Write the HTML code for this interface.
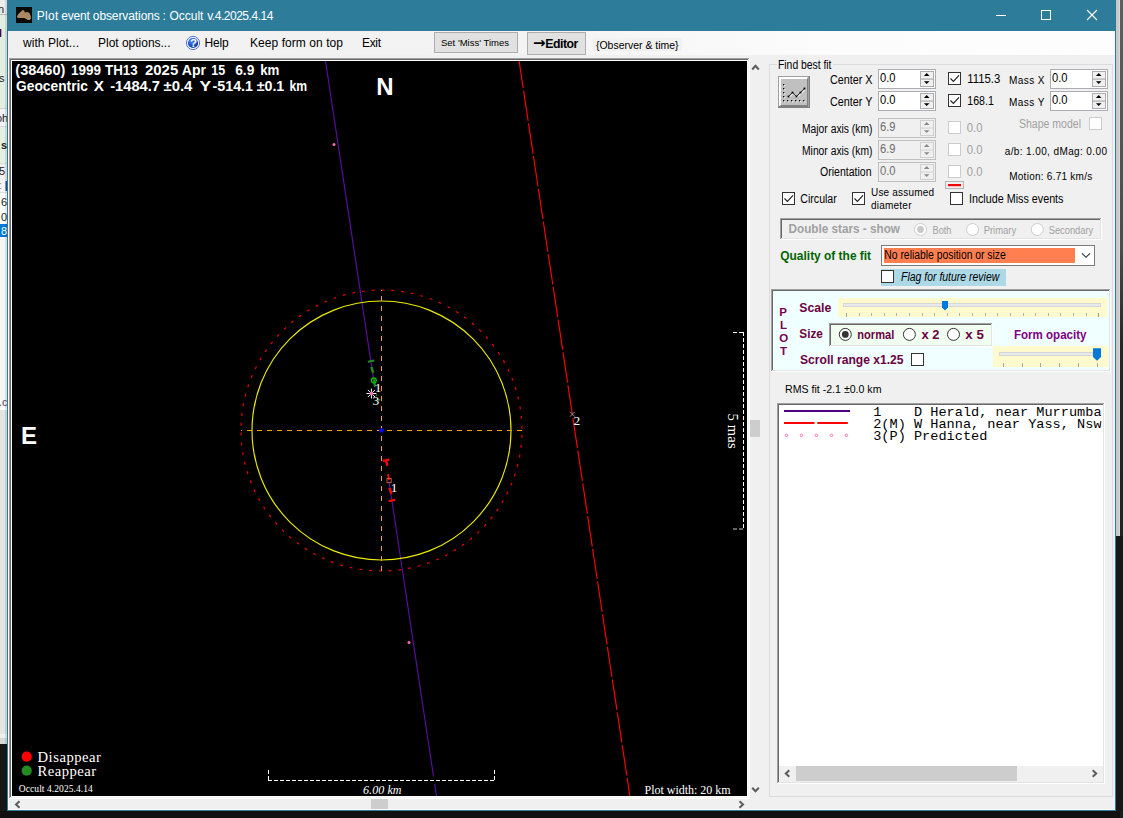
<!DOCTYPE html>
<html lang="en"><head><meta charset="utf-8"><title>Plot event observations : Occult v.4.2025.4.14</title>
<style>html,body{margin:0;padding:0;background:#1b1b1b;overflow:hidden}svg{display:block}text{white-space:pre}</style></head>
<body>
<svg width="1123" height="818" viewBox="0 0 1123 818">
<rect x="0" y="0" width="1123" height="818" fill="#171717" />
<rect x="0" y="811" width="1123" height="7" fill="#111111" />
<rect x="0" y="0" width="7" height="744" fill="#e6e6e6" />
<rect x="0" y="0" width="7" height="15" fill="#ececec" />
<rect x="0" y="15" width="7" height="93" fill="#e2eee2" />
<rect x="0" y="108" width="7" height="19" fill="#f2f2f2" />
<rect x="0" y="127" width="7" height="36" fill="#e4f0e4" />
<rect x="0" y="163" width="7" height="18" fill="#f0f0f0" />
<rect x="0" y="181" width="7" height="12" fill="#f6f6fa" />
<rect x="0" y="193" width="7" height="31" fill="#ffffff" />
<rect x="0" y="224" width="7" height="13" fill="#0078d7" />
<rect x="0" y="237" width="7" height="171" fill="#f6f6f6" />
<rect x="0" y="408" width="7" height="2" fill="#ffffff" />
<rect x="0" y="410" width="7" height="324" fill="#e4e4e4" />
<rect x="0" y="734" width="7" height="4" fill="#f0f0f0" />
<rect x="0" y="738" width="7" height="6" fill="#d8d8d8" />
<rect x="5.5" y="181" width="1.5" height="10" fill="#1c4fa8" />
<rect x="0" y="14" width="7" height="1" fill="#bcbcbc" />
<rect x="0" y="108" width="7" height="1" fill="#d2d2d2" />
<rect x="0" y="126" width="7" height="1" fill="#d8d8d8" />
<rect x="0" y="163" width="7" height="1" fill="#dcdcdc" />
<rect x="0" y="192" width="7" height="1" fill="#e0e0e0" />
<rect x="5" y="0" width="2" height="744" fill="#000" opacity="0.10"/>
<g font-family="Liberation Sans, sans-serif" font-size="11" fill="#222">
<text x="-2" y="13">n</text><text x="-6" y="37" font-weight="bold" fill="#500">H</text><text x="-7" y="82">ns</text><text x="-4" y="122">oh</text>
<text x="1" y="149" font-weight="bold">s</text><text x="-1" y="175">5</text><text x="-1" y="189" fill="#e08020">:</text><text x="1" y="206">6</text><text x="1" y="221">0</text><text x="1" y="235" fill="#fff">8</text><text x="-1" y="406" fill="#546">.c</text>
</g>
<rect x="1116" y="0" width="4" height="536" fill="#c9c9c9" />
<defs><linearGradient id="rg" x1="0" x2="0" y1="0" y2="1"><stop offset="0" stop-color="#5e5e5e"/><stop offset="0.3" stop-color="#4c4c4c"/><stop offset="0.42" stop-color="#262626"/><stop offset="1" stop-color="#1c1c1c"/></linearGradient></defs>
<rect x="1120" y="0" width="3" height="818" fill="url(#rg)" />
<rect x="1119" y="0" width="1" height="536" fill="#dadada" />
<rect x="1116" y="536" width="7" height="275" fill="#171717" />
<rect x="7" y="0" width="1109" height="811" fill="#2d7d9a" />
<rect x="8" y="31" width="1107" height="779" fill="#f0f0f0" />
<rect x="8" y="809" width="1107" height="1" fill="#fbfbfb" />
<rect x="8" y="31" width="1" height="779" fill="#fbf7f7" />
<rect x="16" y="7" width="16" height="16" fill="#0c0a06" />
<path d="M17.0,16.3 L18.6,13.8 L21.1,11.5 L22.7,10.1 L24,10.6 L24.9,12.5 L27.2,11.9 L29.4,13.1 L30.7,15.7 L31,18.5 L29.7,20.1 L27.8,20.1 L25.9,18.8 L24,17.9 L21.1,17.9 L18.3,17.9 L17.1,17.2 Z" fill="#aa8a62"/>
<text y="20" font-family="Liberation Sans, Arial, sans-serif" font-size="12" font-weight="normal" fill="#fff" xml:space="preserve"><tspan x="36.8" textLength="21.6" lengthAdjust="spacing">Plot</tspan> <tspan x="61.2" textLength="28.6" lengthAdjust="spacing">event</tspan> <tspan x="92.8" textLength="67.0" lengthAdjust="spacing">observations</tspan> <tspan x="162.6" textLength="3.0" lengthAdjust="spacing">:</tspan> <tspan x="169.5" textLength="33.9" lengthAdjust="spacing">Occult</tspan> <tspan x="207.2" textLength="66.2" lengthAdjust="spacing">v.4.2025.4.14</tspan></text>
<line x1="996" y1="15.5" x2="1006" y2="15.5" stroke="#fff" stroke-width="1" />
<rect x="1041.5" y="10.5" width="9" height="9" fill="none" stroke="#fff" stroke-width="1"/>
<path d="M1087,10 L1097,20 M1097,10 L1087,20" stroke="#fff" stroke-width="1.1" fill="none"/>
<defs><linearGradient id="mg" x1="0" x2="1" y1="0" y2="0"><stop offset="0" stop-color="#f0f0f0"/><stop offset="0.45" stop-color="#f3f3f3"/><stop offset="0.75" stop-color="#fcfcfc"/><stop offset="1" stop-color="#fdfdfd"/></linearGradient></defs>
<rect x="8" y="31" width="1107" height="24" fill="url(#mg)" />
<text x="23" y="47" font-family="Liberation Sans, Arial, sans-serif" font-size="12" font-weight="normal" font-style="normal" fill="#000" textLength="56" lengthAdjust="spacing" xml:space="preserve" >with Plot...</text>
<text x="98" y="47" font-family="Liberation Sans, Arial, sans-serif" font-size="12" font-weight="normal" font-style="normal" fill="#000" textLength="72.5" lengthAdjust="spacing" xml:space="preserve" >Plot options...</text>
<defs><radialGradient id="hg" cx="0.35" cy="0.3" r="0.8"><stop offset="0" stop-color="#4d82f0"/><stop offset="0.55" stop-color="#1f55c8"/><stop offset="1" stop-color="#0b3597"/></radialGradient></defs>
<circle cx="193" cy="43" r="6.6" fill="#f4f7ff" stroke="#3f6ad0" stroke-width="0.9"/>
<circle cx="193" cy="43" r="5.1" fill="url(#hg)"/>
<text x="190.1" y="47.2" font-family="Liberation Sans, Arial, sans-serif" font-size="11.5" font-weight="bold" font-style="normal" fill="#fff" xml:space="preserve" >?</text>
<text x="204.4" y="47" font-family="Liberation Sans, Arial, sans-serif" font-size="12" font-weight="normal" font-style="normal" fill="#000" textLength="24.3" lengthAdjust="spacing" xml:space="preserve" >Help</text>
<text x="250" y="47" font-family="Liberation Sans, Arial, sans-serif" font-size="12" font-weight="normal" font-style="normal" fill="#000" textLength="93" lengthAdjust="spacing" xml:space="preserve" >Keep form on top</text>
<text x="362" y="47" font-family="Liberation Sans, Arial, sans-serif" font-size="12" font-weight="normal" font-style="normal" fill="#000" textLength="19" lengthAdjust="spacing" xml:space="preserve" >Exit</text>
<rect x="434.5" y="32.5" width="83" height="20" fill="#e1e1e1" stroke="#adadad"/>
<text x="441" y="46" font-family="Liberation Sans, Arial, sans-serif" font-size="9.5" font-weight="normal" font-style="normal" fill="#000" textLength="68" lengthAdjust="spacing" xml:space="preserve" >Set 'Miss' Times</text>
<rect x="527.5" y="32.5" width="58" height="22" fill="#e1e1e1" stroke="#adadad"/>
<text x="533" y="48" font-family="DejaVu Sans, sans-serif" font-size="15" font-weight="bold" font-style="normal" fill="#000" textLength="12.5" lengthAdjust="spacingAndGlyphs" xml:space="preserve" >→</text>
<text x="545.2" y="48" font-family="Liberation Sans, Arial, sans-serif" font-size="12.3" font-weight="bold" font-style="normal" fill="#000" textLength="33.2" lengthAdjust="spacing" xml:space="preserve" >Editor</text>
<rect x="593" y="38" width="89" height="13" fill="#f1f1f1" />
<text x="596" y="49" font-family="Liberation Sans, Arial, sans-serif" font-size="11.7" font-weight="normal" font-style="normal" fill="#000" textLength="82.5" lengthAdjust="spacingAndGlyphs" xml:space="preserve" >{Observer &amp; time}</text>
<rect x="9" y="58" width="741" height="741" fill="#ffffff" />
<rect x="9" y="58" width="740" height="1" fill="#a0a0a0" />
<rect x="9" y="58" width="1" height="740" fill="#a0a0a0" />
<rect x="10" y="59" width="738" height="1" fill="#696969" />
<rect x="10" y="59" width="1" height="738" fill="#696969" />
<rect x="748" y="60" width="1" height="738" fill="#f4f4f4" />
<rect x="11" y="797" width="738" height="1" fill="#f4f4f4" />
<rect x="12" y="61" width="735" height="735" fill="#000" />
<clipPath id="pc"><rect x="12" y="61" width="735" height="735"/></clipPath>
<g clip-path="url(#pc)">
<line x1="325.349" y1="60" x2="373.73" y2="380.4" stroke="#5610a2" stroke-width="1.15" />
<line x1="388.92" y1="481" x2="433.54" y2="776.5" stroke="#5610a2" stroke-width="1.15" />
<line x1="434.67" y1="784" x2="436.64" y2="797" stroke="#5610a2" stroke-width="1.15" />
<line x1="518.9493" y1="60" x2="630.02" y2="797" stroke="#ff0000" stroke-width="1.15" stroke-dasharray="30.6 2.5" stroke-dashoffset="2.2"/>
<circle cx="381.5" cy="430.5" r="140.5" fill="none" stroke="#ec0000" stroke-width="1.2" stroke-dasharray="2.8 7.01" stroke-dashoffset="5.18"/>
<circle cx="381.5" cy="430.5" r="129.5" fill="none" stroke="#ecec00" stroke-width="1.15"/>
<line x1="241" y1="430.5" x2="522" y2="430.5" stroke="#ffa500" stroke-width="1" stroke-dasharray="5 5" stroke-dashoffset="4" shape-rendering="crispEdges"/>
<line x1="381.5" y1="290" x2="381.5" y2="572" stroke="#ffa500" stroke-width="1" stroke-dasharray="5 5" stroke-dashoffset="4" shape-rendering="crispEdges"/>
<circle cx="381.5" cy="430.5" r="2.3" fill="#0000ff"/>
<circle cx="334" cy="144.5" r="1.5" fill="#ff69b4"/><circle cx="409" cy="642.5" r="1.5" fill="#ff69b4"/>
<line x1="367.8" y1="361.7" x2="374.4" y2="360.5" stroke="#228b22" stroke-width="2.1" />
<line x1="371.4" y1="366.8" x2="373.2" y2="372.8" stroke="#228b22" stroke-width="2.4" />
<line x1="373.8" y1="379.5" x2="375.1" y2="386.8" stroke="#228b22" stroke-width="2.3" />
<circle cx="373.8" cy="380.4" r="2.4" fill="none" stroke="#00c000" stroke-width="1.3"/>
<line x1="377.6" y1="400.2" x2="380.2" y2="399.8" stroke="#228b22" stroke-width="1.4" />
<circle cx="376.5" cy="395.2" r="0.9" fill="#228b22"/>
<path d="M366.4,393.5 H376.4 M371.4,388.5 V398.5 M367.8,389.9 L375,397.1 M375,389.9 L367.8,397.1" stroke="#f4f4f4" stroke-width="1" fill="none"/>
<circle cx="371.4" cy="393.5" r="1.7" fill="#ff69b4"/>
<text x="374.8" y="392" font-family="Liberation Serif, Times New Roman, serif" font-size="13.3" font-weight="normal" font-style="normal" fill="#fff" xml:space="preserve" >1</text>
<text x="372.6" y="405" font-family="Liberation Serif, Times New Roman, serif" font-size="13.3" font-weight="normal" font-style="normal" fill="#fff" xml:space="preserve" >3</text>
<line x1="382.8" y1="460.9" x2="389.2" y2="459.6" stroke="#ff0000" stroke-width="2.5" />
<line x1="386" y1="460.5" x2="387.4" y2="465.8" stroke="#ff0000" stroke-width="2.5" />
<line x1="387.8" y1="474" x2="389.2" y2="480" stroke="#ff0000" stroke-width="1.8" />
<rect x="387" y="478.5" width="4.2" height="4.2" fill="none" stroke="#d0603c" stroke-width="0.9"/>
<line x1="389.4" y1="488" x2="391.4" y2="494" stroke="#ff0000" stroke-width="2.5" />
<line x1="388.8" y1="501.1" x2="395.2" y2="499.9" stroke="#ff0000" stroke-width="2.4" />
<text x="390.7" y="492" font-family="Liberation Serif, Times New Roman, serif" font-size="13.3" font-weight="normal" font-style="normal" fill="#fff" xml:space="preserve" >1</text>
<path d="M570,411.8 L574.8,416.6 M574.8,411.8 L570,416.6" stroke="#8c8c8c" stroke-width="1" fill="none"/>
<text x="573.6" y="425" font-family="Liberation Serif, Times New Roman, serif" font-size="13.3" font-weight="normal" font-style="normal" fill="#fff" xml:space="preserve" >2</text>
<text y="75" font-family="Liberation Sans, Arial, sans-serif" font-size="14" font-weight="bold" fill="#fff" xml:space="preserve"><tspan x="15.3" textLength="50.0" lengthAdjust="spacingAndGlyphs">(38460)</tspan> <tspan x="71" textLength="30" lengthAdjust="spacingAndGlyphs">1999</tspan> <tspan x="105" textLength="32.6" lengthAdjust="spacingAndGlyphs">TH13</tspan>  <tspan x="145" textLength="33.2" lengthAdjust="spacingAndGlyphs">2025</tspan> <tspan x="181.8" textLength="24.2" lengthAdjust="spacingAndGlyphs">Apr</tspan> <tspan x="211.3" textLength="13.9" lengthAdjust="spacingAndGlyphs">15</tspan>   <tspan x="235.2" textLength="19.2" lengthAdjust="spacingAndGlyphs">6.9</tspan> <tspan x="260.2" textLength="19.2" lengthAdjust="spacingAndGlyphs">km</tspan></text>
<text y="91" font-family="Liberation Sans, Arial, sans-serif" font-size="14" font-weight="bold" fill="#fff" xml:space="preserve"><tspan x="16" textLength="72" lengthAdjust="spacingAndGlyphs">Geocentric</tspan>  <tspan x="93.8" textLength="10.2" lengthAdjust="spacingAndGlyphs">X</tspan>  <tspan x="110.2" textLength="49.8" lengthAdjust="spacingAndGlyphs">-1484.7</tspan> <tspan x="163.5" textLength="28.9" lengthAdjust="spacingAndGlyphs">±0.4</tspan>  <tspan x="199.6" textLength="11.4" lengthAdjust="spacingAndGlyphs">Y</tspan> <tspan x="212.5" textLength="40.5" lengthAdjust="spacingAndGlyphs">-514.1</tspan> <tspan x="256.7" textLength="27.6" lengthAdjust="spacingAndGlyphs">±0.1</tspan> <tspan x="289.4" textLength="17.6" lengthAdjust="spacingAndGlyphs">km</tspan></text>
<text x="376.3" y="95" font-family="Liberation Sans, Arial, sans-serif" font-size="24" font-weight="bold" font-style="normal" fill="#fff" xml:space="preserve" >N</text>
<text x="21" y="444" font-family="Liberation Sans, Arial, sans-serif" font-size="24" font-weight="bold" font-style="normal" fill="#fff" xml:space="preserve" >E</text>
<circle cx="26.7" cy="756.7" r="5.1" fill="#ff0000"/><circle cx="26.7" cy="770.7" r="5.1" fill="#228b22"/>
<text x="37.5" y="762" font-family="Liberation Serif, Times New Roman, serif" font-size="14.67" font-weight="normal" font-style="normal" fill="#fff" textLength="63.5" lengthAdjust="spacing" xml:space="preserve" >Disappear</text>
<text x="37.5" y="776" font-family="Liberation Serif, Times New Roman, serif" font-size="14.67" font-weight="normal" font-style="normal" fill="#fff" textLength="58.7" lengthAdjust="spacing" xml:space="preserve" >Reappear</text>
<text x="18.8" y="792" font-family="Liberation Serif, Times New Roman, serif" font-size="9.5" font-weight="normal" font-style="normal" fill="#fff" textLength="74" lengthAdjust="spacing" xml:space="preserve" >Occult 4.2025.4.14</text>
<line x1="268.5" y1="770" x2="268.5" y2="781" stroke="#fff" stroke-width="1" stroke-dasharray="4 2" shape-rendering="crispEdges"/>
<line x1="268" y1="780.5" x2="495" y2="780.5" stroke="#fff" stroke-width="1" stroke-dasharray="4 2" shape-rendering="crispEdges"/>
<line x1="494.5" y1="770" x2="494.5" y2="781" stroke="#fff" stroke-width="1" stroke-dasharray="4 2" shape-rendering="crispEdges"/>
<text x="363" y="793.7" font-family="Liberation Serif, Times New Roman, serif" font-size="12" font-weight="normal" font-style="italic" fill="#fff" textLength="38.5" lengthAdjust="spacing" xml:space="preserve" >6.00 km</text>
<text x="644.5" y="793.7" font-family="Liberation Serif, Times New Roman, serif" font-size="12" font-weight="normal" font-style="normal" fill="#fff" textLength="86" lengthAdjust="spacing" xml:space="preserve" >Plot width: 20 km</text>
<line x1="733" y1="332.5" x2="744" y2="332.5" stroke="#fff" stroke-width="1" stroke-dasharray="4 2" shape-rendering="crispEdges"/>
<line x1="743.5" y1="332" x2="743.5" y2="529" stroke="#fff" stroke-width="1" stroke-dasharray="4 2" shape-rendering="crispEdges"/>
<line x1="733" y1="529" x2="744" y2="529" stroke="#c8c8c8" stroke-width="1" stroke-dasharray="4 2"/>
<g transform="translate(727.8,413.6) rotate(90)">
<text x="0" y="0" font-family="Liberation Serif, Times New Roman, serif" font-size="14.67" font-weight="normal" font-style="normal" fill="#fff" textLength="35" lengthAdjust="spacing" xml:space="preserve" >5 mas</text>
</g>
</g>
<rect x="750" y="420" width="10" height="17" fill="#cdcdcd" />
<path d="M752.2,69.5 L755.5,65.8 L758.8,69.5" stroke="#5c5c5c" stroke-width="2" fill="none"/>
<path d="M752.2,787.8 L755.5,791.3 L758.8,787.8" stroke="#5c5c5c" stroke-width="2" fill="none"/>
<rect x="371" y="799" width="17" height="10" fill="#cdcdcd" />
<path d="M19.5,801.2 L16,804.5 L19.5,807.8" stroke="#5c5c5c" stroke-width="2" fill="none"/>
<path d="M739.5,801.2 L743,804.5 L739.5,807.8" stroke="#5c5c5c" stroke-width="2" fill="none"/>
<path d="M777,64.5 H769.5 V796.5 H1112.5 V64.5 H833" fill="none" stroke="#dcdcdc" stroke-width="1"/>
<text x="778" y="69" font-family="Liberation Sans, Arial, sans-serif" font-size="12.5" font-weight="normal" font-style="normal" fill="#000" textLength="53.5" lengthAdjust="spacingAndGlyphs" xml:space="preserve" >Find best fit</text>
<rect x="778" y="76" width="32" height="32" fill="#808080" />
<rect x="778" y="76" width="31" height="31" fill="#a0a0a0" />
<rect x="779" y="77" width="29" height="29" fill="#ffffff" />
<path d="M808,77 V108 H778 V107 L781,105 H807 V79 Z" fill="#808080"/>
<path d="M809,76 V108 H778 Z" fill="#808080" opacity="0"/>
<rect x="781" y="79" width="26" height="26" fill="#c0c0c0" />
<rect x="784" y="85" width="1.2" height="1.2" fill="#fff" />
<rect x="783" y="84" width="1.3" height="1.3" fill="#000" />
<rect x="784" y="89" width="1.2" height="1.2" fill="#fff" />
<rect x="783" y="88" width="1.3" height="1.3" fill="#000" />
<rect x="784" y="93" width="1.2" height="1.2" fill="#fff" />
<rect x="783" y="92" width="1.3" height="1.3" fill="#000" />
<rect x="784" y="97" width="1.2" height="1.2" fill="#fff" />
<rect x="783" y="96" width="1.3" height="1.3" fill="#000" />
<rect x="784" y="101" width="1.2" height="1.2" fill="#fff" />
<rect x="783" y="100" width="1.3" height="1.3" fill="#000" />
<rect x="788" y="101" width="1.2" height="1.2" fill="#fff" />
<rect x="787" y="100" width="1.3" height="1.3" fill="#000" />
<rect x="792" y="101" width="1.2" height="1.2" fill="#fff" />
<rect x="791" y="100" width="1.3" height="1.3" fill="#000" />
<rect x="796" y="101" width="1.2" height="1.2" fill="#fff" />
<rect x="795" y="100" width="1.3" height="1.3" fill="#000" />
<rect x="800" y="101" width="1.2" height="1.2" fill="#fff" />
<rect x="799" y="100" width="1.3" height="1.3" fill="#000" />
<rect x="804" y="101" width="1.2" height="1.2" fill="#fff" />
<rect x="803" y="100" width="1.3" height="1.3" fill="#000" />
<path d="M788.5,96.5 L792.5,92.5 L796.5,96.5 L800.5,92.5 L804.5,88.5" stroke="#fff" stroke-width="1" fill="none" transform="translate(0.8,0.8)"/>
<path d="M788.5,96.5 L792.5,92.5 L796.5,96.5 L800.5,92.5 L804.5,88.5" stroke="#000" stroke-width="0.8" fill="none"/>
<rect x="787.6" y="95.6" width="1.8" height="1.8" fill="#000" />
<rect x="791.6" y="91.6" width="1.8" height="1.8" fill="#000" />
<rect x="795.6" y="95.6" width="1.8" height="1.8" fill="#000" />
<rect x="799.6" y="91.6" width="1.8" height="1.8" fill="#000" />
<rect x="803.6" y="87.6" width="1.8" height="1.8" fill="#000" />
<text x="830" y="84" font-family="Liberation Sans, Arial, sans-serif" font-size="12.5" font-weight="normal" font-style="normal" fill="#000" textLength="42.5" lengthAdjust="spacingAndGlyphs" xml:space="preserve" >Center X</text>
<text x="830" y="106" font-family="Liberation Sans, Arial, sans-serif" font-size="12.5" font-weight="normal" font-style="normal" fill="#000" textLength="42.5" lengthAdjust="spacingAndGlyphs" xml:space="preserve" >Center Y</text>
<rect x="878.5" y="69.5" width="57" height="19" fill="#fff" stroke="#abadb3"/>
<rect x="920.5" y="71.5" width="13" height="15" fill="#f0f0f0" stroke="#adadad"/>
<rect x="921" y="78.5" width="12" height="1.2" fill="#adadad" />
<path d="M923.9000000000001,75.9 L926.7,73 L929.5,75.9 Z" fill="#000"/>
<path d="M923.9000000000001,81.2 L926.7,84.1 L929.5,81.2 Z" fill="#000"/>
<text x="880" y="82" font-family="Liberation Sans, Arial, sans-serif" font-size="12.6" font-weight="normal" font-style="normal" fill="#000" textLength="15.5" lengthAdjust="spacingAndGlyphs" xml:space="preserve" >0.0</text>
<rect x="878.5" y="91.5" width="57" height="19" fill="#fff" stroke="#abadb3"/>
<rect x="920.5" y="93.5" width="13" height="15" fill="#f0f0f0" stroke="#adadad"/>
<rect x="921" y="100.5" width="12" height="1.2" fill="#adadad" />
<path d="M923.9000000000001,97.9 L926.7,95 L929.5,97.9 Z" fill="#000"/>
<path d="M923.9000000000001,103.2 L926.7,106.1 L929.5,103.2 Z" fill="#000"/>
<text x="880" y="104" font-family="Liberation Sans, Arial, sans-serif" font-size="12.6" font-weight="normal" font-style="normal" fill="#000" textLength="15.5" lengthAdjust="spacingAndGlyphs" xml:space="preserve" >0.0</text>
<rect x="948.5" y="72.5" width="12" height="12" fill="#fff" stroke="#333333"/>
<path d="M950.5,78.5 L953.4,81.5 L959,75.4" fill="none" stroke="#222" stroke-width="1.15"/>
<rect x="948.5" y="94.5" width="12" height="12" fill="#fff" stroke="#333333"/>
<path d="M950.5,100.5 L953.4,103.5 L959,97.4" fill="none" stroke="#222" stroke-width="1.15"/>
<text x="967.3" y="83" font-family="Liberation Sans, Arial, sans-serif" font-size="12.6" font-weight="normal" font-style="normal" fill="#000" textLength="33" lengthAdjust="spacingAndGlyphs" xml:space="preserve" >1115.3</text>
<text x="967.3" y="105" font-family="Liberation Sans, Arial, sans-serif" font-size="12.6" font-weight="normal" font-style="normal" fill="#000" textLength="26.5" lengthAdjust="spacingAndGlyphs" xml:space="preserve" >168.1</text>
<text x="1009" y="84" font-family="Liberation Sans, Arial, sans-serif" font-size="10" font-weight="normal" font-style="normal" fill="#000" textLength="35.5" lengthAdjust="spacing" xml:space="preserve" >Mass X</text>
<text x="1009" y="106" font-family="Liberation Sans, Arial, sans-serif" font-size="10" font-weight="normal" font-style="normal" fill="#000" textLength="35.5" lengthAdjust="spacing" xml:space="preserve" >Mass Y</text>
<rect x="1050.5" y="69.5" width="57" height="19" fill="#fff" stroke="#abadb3"/>
<rect x="1092.5" y="71.5" width="13" height="15" fill="#f0f0f0" stroke="#adadad"/>
<rect x="1093" y="78.5" width="12" height="1.2" fill="#adadad" />
<path d="M1095.9,75.9 L1098.7,73 L1101.5,75.9 Z" fill="#000"/>
<path d="M1095.9,81.2 L1098.7,84.1 L1101.5,81.2 Z" fill="#000"/>
<text x="1052" y="82" font-family="Liberation Sans, Arial, sans-serif" font-size="12.6" font-weight="normal" font-style="normal" fill="#000" textLength="15.5" lengthAdjust="spacingAndGlyphs" xml:space="preserve" >0.0</text>
<rect x="1050.5" y="91.5" width="57" height="19" fill="#fff" stroke="#abadb3"/>
<rect x="1092.5" y="93.5" width="13" height="15" fill="#f0f0f0" stroke="#adadad"/>
<rect x="1093" y="100.5" width="12" height="1.2" fill="#adadad" />
<path d="M1095.9,97.9 L1098.7,95 L1101.5,97.9 Z" fill="#000"/>
<path d="M1095.9,103.2 L1098.7,106.1 L1101.5,103.2 Z" fill="#000"/>
<text x="1052" y="104" font-family="Liberation Sans, Arial, sans-serif" font-size="12.6" font-weight="normal" font-style="normal" fill="#000" textLength="15.5" lengthAdjust="spacingAndGlyphs" xml:space="preserve" >0.0</text>
<text x="802" y="133" font-family="Liberation Sans, Arial, sans-serif" font-size="12.5" font-weight="normal" font-style="normal" fill="#000" textLength="70.5" lengthAdjust="spacingAndGlyphs" xml:space="preserve" >Major axis (km)</text>
<text x="802" y="155" font-family="Liberation Sans, Arial, sans-serif" font-size="12.5" font-weight="normal" font-style="normal" fill="#000" textLength="70.5" lengthAdjust="spacingAndGlyphs" xml:space="preserve" >Minor axis (km)</text>
<text x="820" y="176" font-family="Liberation Sans, Arial, sans-serif" font-size="12.5" font-weight="normal" font-style="normal" fill="#000" textLength="51.5" lengthAdjust="spacingAndGlyphs" xml:space="preserve" >Orientation</text>
<rect x="878.5" y="118.5" width="57" height="19" fill="#f0f0f0" stroke="#bfbfbf"/>
<rect x="920.5" y="120.5" width="13" height="15" fill="#f0f0f0" stroke="#d0d0d0"/>
<rect x="921" y="127.5" width="12" height="1.2" fill="#d6d6d6" />
<path d="M923.9000000000001,124.9 L926.7,122 L929.5,124.9 Z" fill="#8a8a8a"/>
<path d="M923.9000000000001,130.2 L926.7,133.1 L929.5,130.2 Z" fill="#8a8a8a"/>
<text x="880" y="131" font-family="Liberation Sans, Arial, sans-serif" font-size="12.6" font-weight="normal" font-style="normal" fill="#6d6d6d" textLength="15.5" lengthAdjust="spacingAndGlyphs" xml:space="preserve" >6.9</text>
<rect x="878.5" y="140.5" width="57" height="19" fill="#f0f0f0" stroke="#bfbfbf"/>
<rect x="920.5" y="142.5" width="13" height="15" fill="#f0f0f0" stroke="#d0d0d0"/>
<rect x="921" y="149.5" width="12" height="1.2" fill="#d6d6d6" />
<path d="M923.9000000000001,146.9 L926.7,144 L929.5,146.9 Z" fill="#8a8a8a"/>
<path d="M923.9000000000001,152.2 L926.7,155.1 L929.5,152.2 Z" fill="#8a8a8a"/>
<text x="880" y="153" font-family="Liberation Sans, Arial, sans-serif" font-size="12.6" font-weight="normal" font-style="normal" fill="#6d6d6d" textLength="15.5" lengthAdjust="spacingAndGlyphs" xml:space="preserve" >6.9</text>
<rect x="878.5" y="162.5" width="57" height="19" fill="#f0f0f0" stroke="#bfbfbf"/>
<rect x="920.5" y="164.5" width="13" height="15" fill="#f0f0f0" stroke="#d0d0d0"/>
<rect x="921" y="171.5" width="12" height="1.2" fill="#d6d6d6" />
<path d="M923.9000000000001,168.9 L926.7,166 L929.5,168.9 Z" fill="#8a8a8a"/>
<path d="M923.9000000000001,174.2 L926.7,177.1 L929.5,174.2 Z" fill="#8a8a8a"/>
<text x="880" y="175" font-family="Liberation Sans, Arial, sans-serif" font-size="12.6" font-weight="normal" font-style="normal" fill="#6d6d6d" textLength="15.5" lengthAdjust="spacingAndGlyphs" xml:space="preserve" >0.0</text>
<rect x="948.5" y="121.5" width="12" height="12" fill="#fff" stroke="#cccccc"/>
<text x="966.8" y="132" font-family="Liberation Sans, Arial, sans-serif" font-size="12.6" font-weight="normal" font-style="normal" fill="#a0a0a0" textLength="15.7" lengthAdjust="spacingAndGlyphs" xml:space="preserve" >0.0</text>
<rect x="948.5" y="143.5" width="12" height="12" fill="#fff" stroke="#cccccc"/>
<text x="966.8" y="154" font-family="Liberation Sans, Arial, sans-serif" font-size="12.6" font-weight="normal" font-style="normal" fill="#a0a0a0" textLength="15.7" lengthAdjust="spacingAndGlyphs" xml:space="preserve" >0.0</text>
<rect x="948.5" y="165.5" width="12" height="12" fill="#fff" stroke="#cccccc"/>
<text x="966.8" y="176" font-family="Liberation Sans, Arial, sans-serif" font-size="12.6" font-weight="normal" font-style="normal" fill="#a0a0a0" textLength="15.7" lengthAdjust="spacingAndGlyphs" xml:space="preserve" >0.0</text>
<text x="1019" y="128" font-family="Liberation Sans, Arial, sans-serif" font-size="12.5" font-weight="normal" font-style="normal" fill="#a0a0a0" textLength="62" lengthAdjust="spacingAndGlyphs" xml:space="preserve" >Shape model</text>
<rect x="1089.5" y="117.5" width="12" height="12" fill="#fff" stroke="#cccccc"/>
<text x="1004.7" y="155" font-family="Liberation Sans, Arial, sans-serif" font-size="10" font-weight="normal" font-style="normal" fill="#000" textLength="102.3" lengthAdjust="spacing" xml:space="preserve" >a/b: 1.00, dMag: 0.00</text>
<text x="1009.2" y="180" font-family="Liberation Sans, Arial, sans-serif" font-size="10" font-weight="normal" font-style="normal" fill="#000" textLength="83" lengthAdjust="spacing" xml:space="preserve" >Motion: 6.71 km/s</text>
<rect x="945.5" y="181.5" width="18" height="7" fill="#f0f0f0" stroke="#b4b4b4"/>
<rect x="948" y="184" width="13" height="2.2" fill="#ff0000" />
<rect x="782.5" y="192.5" width="12" height="12" fill="#fff" stroke="#333333"/>
<path d="M784.5,198.5 L787.4,201.5 L793,195.4" fill="none" stroke="#222" stroke-width="1.15"/>
<text x="800.3" y="203" font-family="Liberation Sans, Arial, sans-serif" font-size="12.5" font-weight="normal" font-style="normal" fill="#000" textLength="36.5" lengthAdjust="spacingAndGlyphs" xml:space="preserve" >Circular</text>
<rect x="852.5" y="192.5" width="12" height="12" fill="#fff" stroke="#333333"/>
<path d="M854.5,198.5 L857.4,201.5 L863,195.4" fill="none" stroke="#222" stroke-width="1.15"/>
<text x="871" y="196" font-family="Liberation Sans, Arial, sans-serif" font-size="10" font-weight="normal" font-style="normal" fill="#000" textLength="63" lengthAdjust="spacing" xml:space="preserve" >Use assumed</text>
<text x="871" y="209" font-family="Liberation Sans, Arial, sans-serif" font-size="10" font-weight="normal" font-style="normal" fill="#000" textLength="40.5" lengthAdjust="spacing" xml:space="preserve" >diameter</text>
<rect x="950.5" y="192.5" width="12" height="12" fill="#fff" stroke="#333333"/>
<text x="969" y="203" font-family="Liberation Sans, Arial, sans-serif" font-size="12.5" font-weight="normal" font-style="normal" fill="#000" textLength="94.5" lengthAdjust="spacingAndGlyphs" xml:space="preserve" >Include Miss events</text>
<rect x="780" y="218" width="322" height="22" fill="#ffffff" />
<rect x="780" y="218" width="321" height="21" fill="#a0a0a0" />
<rect x="781" y="219" width="320" height="20" fill="#e3e3e3" />
<rect x="781" y="219" width="319" height="19" fill="#696969" />
<rect x="782" y="220" width="318" height="18" fill="#f0f0f0" />
<text x="788.5" y="233" font-family="Liberation Sans, Arial, sans-serif" font-size="13" font-weight="bold" font-style="normal" fill="#a0a0a0" textLength="111.5" lengthAdjust="spacingAndGlyphs" xml:space="preserve" >Double stars - show</text>
<circle cx="920.5" cy="229.5" r="6" fill="#fff" stroke="#cccccc"/>
<circle cx="920.5" cy="229.5" r="3.4" fill="#c8c8c8"/>
<text x="932.5" y="234" font-family="Liberation Sans, Arial, sans-serif" font-size="10" font-weight="normal" font-style="normal" fill="#a0a0a0" textLength="19" lengthAdjust="spacingAndGlyphs" xml:space="preserve" >Both</text>
<circle cx="972.5" cy="229.5" r="6" fill="#fff" stroke="#cccccc"/>
<text x="983.7" y="234" font-family="Liberation Sans, Arial, sans-serif" font-size="10" font-weight="normal" font-style="normal" fill="#a0a0a0" textLength="32.5" lengthAdjust="spacingAndGlyphs" xml:space="preserve" >Primary</text>
<circle cx="1037.3" cy="229.5" r="6" fill="#fff" stroke="#cccccc"/>
<text x="1048.7" y="234" font-family="Liberation Sans, Arial, sans-serif" font-size="10" font-weight="normal" font-style="normal" fill="#a0a0a0" textLength="44.5" lengthAdjust="spacingAndGlyphs" xml:space="preserve" >Secondary</text>
<text x="780.3" y="260" font-family="Liberation Sans, Arial, sans-serif" font-size="12.6" font-weight="bold" font-style="normal" fill="#006400" textLength="90.8" lengthAdjust="spacingAndGlyphs" xml:space="preserve" >Quality of the fit</text>
<rect x="881.5" y="245.5" width="213" height="20" fill="#fff" stroke="#7a7a7a"/>
<rect x="884" y="248" width="191" height="15" fill="#ff7f50" />
<text x="884.3" y="259" font-family="Liberation Sans, Arial, sans-serif" font-size="12.5" font-weight="normal" font-style="normal" fill="#000" textLength="121.5" lengthAdjust="spacingAndGlyphs" xml:space="preserve" >No reliable position or size</text>
<path d="M1082,253.3 L1086,257.3 L1090,253.3" fill="none" stroke="#333" stroke-width="1.1"/>
<rect x="881" y="269" width="125" height="17" fill="#add8e6" />
<rect x="881.5" y="270.5" width="12" height="12" fill="#fff" stroke="#333333"/>
<text x="901" y="281" font-family="Liberation Sans, Arial, sans-serif" font-size="12.5" font-weight="normal" font-style="italic" fill="#000" textLength="98.3" lengthAdjust="spacingAndGlyphs" xml:space="preserve" >Flag for future review</text>
<rect x="771" y="289" width="340" height="83" fill="#ffffff" />
<rect x="771" y="289" width="339" height="82" fill="#a0a0a0" />
<rect x="772" y="290" width="338" height="81" fill="#e3e3e3" />
<rect x="772" y="290" width="337" height="80" fill="#696969" />
<rect x="773" y="291" width="336" height="79" fill="#f0ffff" />
<text x="779.3" y="315.5" font-family="Liberation Sans, Arial, sans-serif" font-size="11.5" font-weight="bold" font-style="normal" fill="#7a0050" xml:space="preserve" >P</text>
<text x="779.9" y="328.5" font-family="Liberation Sans, Arial, sans-serif" font-size="11.5" font-weight="bold" font-style="normal" fill="#7a0050" xml:space="preserve" >L</text>
<text x="779.3" y="341.5" font-family="Liberation Sans, Arial, sans-serif" font-size="11.5" font-weight="bold" font-style="normal" fill="#7a0050" xml:space="preserve" >O</text>
<text x="779.9" y="354.5" font-family="Liberation Sans, Arial, sans-serif" font-size="11.5" font-weight="bold" font-style="normal" fill="#7a0050" xml:space="preserve" >T</text>
<text x="799.3" y="312" font-family="Liberation Sans, Arial, sans-serif" font-size="12" font-weight="bold" font-style="normal" fill="#6c0042" textLength="32" lengthAdjust="spacingAndGlyphs" xml:space="preserve" >Scale</text>
<rect x="838" y="298" width="269" height="19" fill="#fffacd" />
<rect x="843.5" y="303.5" width="257" height="3" fill="#e7eaea" stroke="#d6d6d6"/>
<rect x="846" y="313" width="1" height="4" fill="#a0a0a0" />
<rect x="859" y="313" width="1" height="3" fill="#b4b4b4" />
<rect x="871" y="313" width="1" height="3" fill="#b4b4b4" />
<rect x="884" y="313" width="1" height="3" fill="#b4b4b4" />
<rect x="896" y="313" width="1" height="3" fill="#b4b4b4" />
<rect x="909" y="313" width="1" height="3" fill="#b4b4b4" />
<rect x="922" y="313" width="1" height="3" fill="#b4b4b4" />
<rect x="934" y="313" width="1" height="3" fill="#b4b4b4" />
<rect x="947" y="313" width="1" height="3" fill="#b4b4b4" />
<rect x="959" y="313" width="1" height="3" fill="#b4b4b4" />
<rect x="972" y="313" width="1" height="3" fill="#b4b4b4" />
<rect x="985" y="313" width="1" height="3" fill="#b4b4b4" />
<rect x="997" y="313" width="1" height="3" fill="#b4b4b4" />
<rect x="1010" y="313" width="1" height="3" fill="#b4b4b4" />
<rect x="1023" y="313" width="1" height="3" fill="#b4b4b4" />
<rect x="1035" y="313" width="1" height="3" fill="#b4b4b4" />
<rect x="1048" y="313" width="1" height="3" fill="#b4b4b4" />
<rect x="1060" y="313" width="1" height="3" fill="#b4b4b4" />
<rect x="1073" y="313" width="1" height="3" fill="#b4b4b4" />
<rect x="1086" y="313" width="1" height="3" fill="#b4b4b4" />
<rect x="1098" y="313" width="1" height="4" fill="#a0a0a0" />
<path d="M942,301 H948 V307.5 L945,310.5 L942,307.5 Z" fill="#0078d7"/>
<text x="799.3" y="337.6" font-family="Liberation Sans, Arial, sans-serif" font-size="12" font-weight="bold" font-style="normal" fill="#6c0042" textLength="23.5" lengthAdjust="spacingAndGlyphs" xml:space="preserve" >Size</text>
<rect x="829" y="323" width="164" height="24" fill="#ffffff" />
<rect x="829" y="323" width="163" height="23" fill="#a0a0a0" />
<rect x="830" y="324" width="162" height="22" fill="#e3e3e3" />
<rect x="830" y="324" width="161" height="21" fill="#696969" />
<rect x="831" y="325" width="160" height="20" fill="#f0fff0" />
<circle cx="845.3" cy="334.4" r="6" fill="#fff" stroke="#333333"/>
<circle cx="845.3" cy="334.4" r="3.4" fill="#333"/>
<text x="857.3" y="338.6" font-family="Liberation Sans, Arial, sans-serif" font-size="12" font-weight="bold" font-style="normal" fill="#6c0042" textLength="37" lengthAdjust="spacingAndGlyphs" xml:space="preserve" >normal</text>
<circle cx="909.4" cy="334.4" r="6" fill="#fff" stroke="#333333"/>
<text x="921.5" y="338.6" font-family="Liberation Sans, Arial, sans-serif" font-size="12" font-weight="bold" font-style="normal" fill="#6c0042" textLength="18" lengthAdjust="spacingAndGlyphs" xml:space="preserve" >x 2</text>
<circle cx="953.5" cy="334.4" r="6" fill="#fff" stroke="#333333"/>
<text x="965.3" y="338.6" font-family="Liberation Sans, Arial, sans-serif" font-size="12" font-weight="bold" font-style="normal" fill="#6c0042" textLength="18.5" lengthAdjust="spacingAndGlyphs" xml:space="preserve" >x 5</text>
<text x="1014" y="338.9" font-family="Liberation Sans, Arial, sans-serif" font-size="12" font-weight="bold" font-style="normal" fill="#800080" textLength="72.5" lengthAdjust="spacingAndGlyphs" xml:space="preserve" >Form opacity</text>
<text x="800" y="364" font-family="Liberation Sans, Arial, sans-serif" font-size="12" font-weight="bold" font-style="normal" fill="#6c0042" textLength="103.5" lengthAdjust="spacingAndGlyphs" xml:space="preserve" >Scroll range x1.25</text>
<rect x="911.5" y="353.5" width="12" height="12" fill="#fff" stroke="#333333"/>
<rect x="993" y="346" width="115" height="21" fill="#fffacd" />
<rect x="999.5" y="352.5" width="101" height="3" fill="#e7eaea" stroke="#d6d6d6"/>
<rect x="1003" y="363" width="1" height="4" fill="#a8a8a8" />
<rect x="1022" y="363" width="1" height="4" fill="#a8a8a8" />
<rect x="1040" y="363" width="1" height="4" fill="#a8a8a8" />
<rect x="1059" y="363" width="1" height="4" fill="#a8a8a8" />
<rect x="1078" y="363" width="1" height="4" fill="#a8a8a8" />
<rect x="1097" y="363" width="1" height="4" fill="#a8a8a8" />
<path d="M1093,348.3 H1101 V357 L1097,360.8 L1093,357 Z" fill="#0078d7"/>
<text x="785" y="393" font-family="Liberation Sans, Arial, sans-serif" font-size="11.5" font-weight="normal" font-style="normal" fill="#000" textLength="96.5" lengthAdjust="spacingAndGlyphs" xml:space="preserve" >RMS fit -2.1 ±0.0 km</text>
<rect x="777" y="403" width="328" height="381" fill="#ffffff" />
<rect x="777" y="403" width="327" height="380" fill="#a0a0a0" />
<rect x="778" y="404" width="326" height="379" fill="#e3e3e3" />
<rect x="778" y="404" width="325" height="378" fill="#696969" />
<rect x="779" y="405" width="324" height="377" fill="#ffffff" />
<rect x="784" y="410" width="66" height="2" fill="#4b0082" />
<rect x="784" y="422" width="30.5" height="2" fill="#ff0000" />
<rect x="817.3" y="422" width="30.5" height="2" fill="#ff0000" />
<circle cx="786.5" cy="435.4" r="1.3" fill="#fff" stroke="#ff69b4" stroke-width="0.9"/>
<circle cx="801.5" cy="435.4" r="1.3" fill="#fff" stroke="#ff69b4" stroke-width="0.9"/>
<circle cx="816.4" cy="435.4" r="1.3" fill="#fff" stroke="#ff69b4" stroke-width="0.9"/>
<circle cx="831.4" cy="435.4" r="1.3" fill="#fff" stroke="#ff69b4" stroke-width="0.9"/>
<circle cx="846.4" cy="435.4" r="1.3" fill="#fff" stroke="#ff69b4" stroke-width="0.9"/>
<clipPath id="lc"><rect x="779" y="405" width="322.5" height="361"/></clipPath>
<g clip-path="url(#lc)">
<text x="865" y="416" font-family="Liberation Mono, Courier New, monospace" font-size="13.6" font-weight="normal" font-style="normal" fill="#000" xml:space="preserve" > 1    D Herald, near Murrumbateman, Nsw</text>
<text x="865" y="428" font-family="Liberation Mono, Courier New, monospace" font-size="13.6" font-weight="normal" font-style="normal" fill="#000" xml:space="preserve" > 2(M) W Hanna, near Yass, Nsw</text>
<text x="865" y="440" font-family="Liberation Mono, Courier New, monospace" font-size="13.6" font-weight="normal" font-style="normal" fill="#000" xml:space="preserve" > 3(P) Predicted</text>
</g>
<rect x="779" y="766" width="324" height="16" fill="#f0f0f0" />
<rect x="796" y="766" width="221" height="15" fill="#cdcdcd" />
<path d="M789.3,770.2 L785.8,773.5 L789.3,776.8" stroke="#5c5c5c" stroke-width="2" fill="none"/>
<path d="M1092.7,770.2 L1096.2,773.5 L1092.7,776.8" stroke="#5c5c5c" stroke-width="2" fill="none"/>
</svg>
</body></html>
